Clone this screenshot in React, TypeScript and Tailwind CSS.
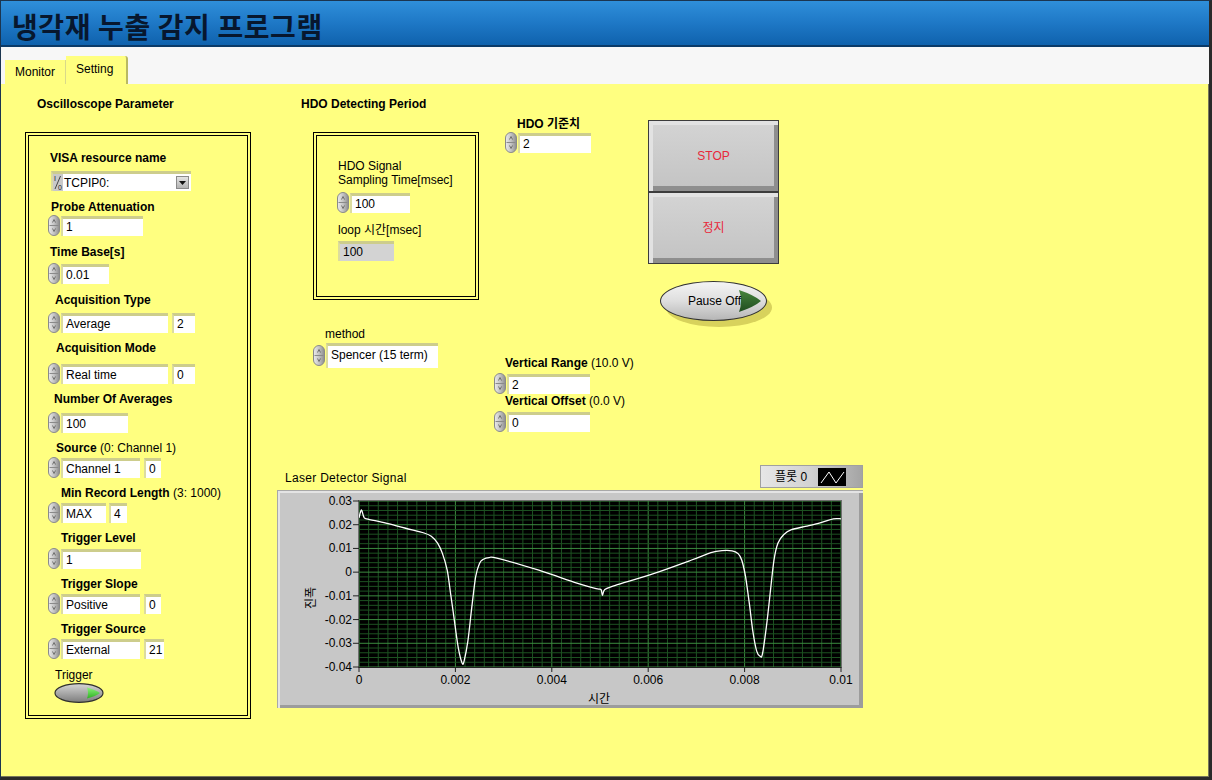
import React from 'react';

const F = 'font-[family-name:Liberation_Sans,Noto_Sans_CJK_KR,sans-serif]';
const SVGF = 'Liberation Sans, Noto Sans CJK KR, sans-serif';

// waveform samples [time, amplitude]
const TRACE: [number, number][] = [
  [0, 0.0229], [0.00005, 0.0262], [0.0001, 0.0233], [0.00016, 0.0225], [0.00056, 0.0207],
  [0.00095, 0.0186], [0.00135, 0.0165], [0.0015, 0.0151], [0.00163, 0.0122], [0.00173, 0.0079],
  [0.00183, 0.0008], [0.0019, -0.0091], [0.00198, -0.0205], [0.00206, -0.0319], [0.00214, -0.0383],
  [0.00218, -0.0375], [0.00226, -0.029], [0.00234, -0.0148], [0.00242, -0.002], [0.0025, 0.0037],
  [0.00258, 0.0054], [0.0027, 0.0061], [0.00286, 0.0059], [0.00373, 0.0008], [0.00452, -0.0046],
  [0.00492, -0.007], [0.00502, -0.0073], [0.00505, -0.0098], [0.0051, -0.0073], [0.00532, -0.0056],
  [0.00611, -0.0006], [0.0069, 0.0051], [0.0073, 0.0082], [0.00754, 0.0091], [0.00774, 0.009],
  [0.00786, 0.0079], [0.00794, 0.0051], [0.00802, -0.002], [0.0081, -0.0134], [0.00817, -0.0248],
  [0.00825, -0.0333], [0.00832, -0.0354], [0.00837, -0.0346], [0.00845, -0.0233], [0.00853, -0.0091],
  [0.00861, 0.0051], [0.00869, 0.0122], [0.00881, 0.0158], [0.00897, 0.0179], [0.00929, 0.0194],
  [0.0096, 0.021], [0.00984, 0.0225], [0.01, 0.0225],
];

function Spin() {
  return (
    <svg width="12" height="21" viewBox="0 0 12 21" className="shrink-0">
      <defs>
        <linearGradient id="spg" x1="0" x2="1" y1="0" y2="0">
          <stop offset="0" stopColor="#ececec" />
          <stop offset="0.5" stopColor="#c4c4c4" />
          <stop offset="1" stopColor="#8c8c8c" />
        </linearGradient>
      </defs>
      <rect x="0.5" y="0.5" width="11" height="20" rx="5.5" fill="url(#spg)" stroke="#8a8a8a" />
      <line x1="1.5" y1="10.5" x2="10.5" y2="10.5" stroke="#8a8a8a" />
      <path d="M4.5 7.5 L6 4.5 L7.5 7.5" fill="none" stroke="#5a5a5a" strokeWidth="0.8" />
      <path d="M4.5 13.5 L6 16.5 L7.5 13.5" fill="none" stroke="#5a5a5a" strokeWidth="0.8" />
    </svg>
  );
}

function Field({ w, v, gray = false, extra = '' }: { w: string; v: string; gray?: boolean; extra?: string }) {
  return (
    <div
      className={`${w} ${extra} h-[20px] shrink-0 border-t-[3px] border-l-[2px] border-t-[#cdcd8c] border-l-[#dcdc9e] ${
        gray ? 'bg-[#d3d3d3]' : 'bg-white'
      } pl-[3px] text-[12px] leading-[17px] text-black whitespace-nowrap overflow-hidden`}
    >
      {v}
    </div>
  );
}

function Label({ children, cls, bold = true }: { children: React.ReactNode; cls: string; bold?: boolean }) {
  return (
    <div className={`${cls} h-[14px] text-[12px] leading-[14px] whitespace-nowrap text-black ${bold ? 'font-bold' : ''}`}>
      {children}
    </div>
  );
}

function Visa() {
  return (
    <div className="ml-[22px] flex h-[20px] w-[140px] border-t-[3px] border-l-[2px] border-t-[#cdcd8c] border-l-[#dcdc9e]">
      <svg width="10" height="17" viewBox="0 0 10 17" className="bg-[#c9c9c9] shrink-0">
        <text x="1" y="7" fontSize="7" fontFamily={SVGF} fill="#222">I</text>
        <line x1="7.5" y1="2" x2="2" y2="15" stroke="#222" strokeWidth="0.8" />
        <text x="5" y="16" fontSize="7" fontFamily={SVGF} fill="#222">0</text>
      </svg>
      <div className="flex-1 bg-white flex items-center justify-between pl-[1px] pr-[2px]">
        <span className="text-[12px] leading-[14px]">TCPIP0:</span>
        <div className="w-[13px] h-[13px] bg-linear-to-b from-[#e4e4e4] to-[#b4b4b4] border border-[#8a8a8a] flex items-center justify-center">
          <svg width="7" height="4" viewBox="0 0 7 4">
            <path d="M0 0 L7 0 L3.5 4 Z" fill="#111" />
          </svg>
        </div>
      </div>
    </div>
  );
}

function Toggle() {
  return (
    <svg width="50" height="20" viewBox="0 0 50 20" className="ml-[25px]">
      <defs>
        <linearGradient id="tgg" x1="0" x2="0" y1="0" y2="1">
          <stop offset="0" stopColor="#d6d6d6" />
          <stop offset="0.5" stopColor="#a9a9a9" />
          <stop offset="1" stopColor="#7d7d7d" />
        </linearGradient>
        <linearGradient id="tgn" x1="0" x2="0" y1="0" y2="1">
          <stop offset="0" stopColor="#8af27a" />
          <stop offset="1" stopColor="#2fb022" />
        </linearGradient>
      </defs>
      <ellipse cx="25" cy="10" rx="24" ry="9.3" fill="url(#tgg)" stroke="#2e2e2e" strokeWidth="1.2" />
      <path d="M33 4.5 Q42 7 46 10 Q42 13 33 15.5 Q35 10 33 4.5 Z" fill="url(#tgn)" />
    </svg>
  );
}

function OscPanel() {
  return (
    <div className="ml-[24px] flex flex-col shrink-0">
      <Label cls="mt-[13px] ml-[12px]">Oscilloscope Parameter</Label>
      <div className="mt-[21px] w-[226px] h-[587px] border-[4px] border-double border-black flex flex-col">
        <div className="mt-[15px]">
          <Label cls="ml-[21px]">VISA resource name</Label>
          <div className="mt-[6px]">
            <Visa />
          </div>
        </div>
        <div className="mt-[9px]">
          <Label cls="ml-[22px]">Probe Attenuation</Label>
          <div className="mt-[1px] ml-[19px] flex items-center gap-[1px]">
            <Spin />
            <Field w="w-[82px]" v="1" />
          </div>
        </div>
        <div className="mt-[9px]">
          <Label cls="ml-[21px]">Time Base[s]</Label>
          <div className="mt-[4px] ml-[19px] flex items-center gap-[1px]">
            <Spin />
            <Field w="w-[48px]" v="0.01" />
          </div>
        </div>
        <div className="mt-[9px]">
          <Label cls="ml-[26px]">Acquisition Type</Label>
          <div className="mt-[5px] ml-[19px] flex items-center gap-[1px]">
            <Spin />
            <Field w="w-[107px]" v="Average" />
            <Field w="w-[23px]" v="2" extra="ml-[3px]" />
          </div>
        </div>
        <div className="mt-[8px]">
          <Label cls="ml-[27px]">Acquisition Mode</Label>
          <div className="mt-[8px] ml-[19px] flex items-center gap-[1px]">
            <Spin />
            <Field w="w-[107px]" v="Real time" />
            <Field w="w-[23px]" v="0" extra="ml-[3px]" />
          </div>
        </div>
        <div className="mt-[8px]">
          <Label cls="ml-[25px]">Number Of Averages</Label>
          <div className="mt-[6px] ml-[19px] flex items-center gap-[1px]">
            <Spin />
            <Field w="w-[67px]" v="100" />
          </div>
        </div>
        <div className="mt-[8px]">
          <Label cls="ml-[27px]">
            Source <span className="font-normal">(0: Channel 1)</span>
          </Label>
          <div className="mt-[2px] ml-[19px] flex items-center gap-[1px]">
            <Spin />
            <Field w="w-[79px]" v="Channel 1" />
            <Field w="w-[17px]" v="0" extra="ml-[3px]" />
          </div>
        </div>
        <div className="mt-[8px]">
          <Label cls="ml-[32px]">
            Min Record Length <span className="font-normal">(3: 1000)</span>
          </Label>
          <div className="mt-[2px] ml-[19px] flex items-center gap-[1px]">
            <Spin />
            <Field w="w-[45px]" v="MAX" />
            <Field w="w-[18px]" v="4" extra="ml-[2px]" />
          </div>
        </div>
        <div className="mt-[8px]">
          <Label cls="ml-[32px]">Trigger Level</Label>
          <div className="mt-[3px] ml-[19px] flex items-center gap-[1px]">
            <Spin />
            <Field w="w-[80px]" v="1" />
          </div>
        </div>
        <div className="mt-[8px]">
          <Label cls="ml-[32px]">Trigger Slope</Label>
          <div className="mt-[2px] ml-[19px] flex items-center gap-[1px]">
            <Spin />
            <Field w="w-[79px]" v="Positive" />
            <Field w="w-[17px]" v="0" extra="ml-[3px]" />
          </div>
        </div>
        <div className="mt-[8px]">
          <Label cls="ml-[32px]">Trigger Source</Label>
          <div className="mt-[2px] ml-[19px] flex items-center gap-[1px]">
            <Spin />
            <Field w="w-[79px]" v="External" />
            <Field w="w-[20px]" v="21" extra="ml-[3px]" />
          </div>
        </div>
        <div className="mt-[9px]">
          <Label cls="ml-[26px]" bold={false}>Trigger</Label>
          <div className="mt-[1px]">
            <Toggle />
          </div>
        </div>
      </div>
    </div>
  );
}

function BigButton({ text }: { text: string }) {
  return (
    <div className="w-[131px] h-[72px] border border-[#3c3c3c] bg-linear-to-b from-[#d4d4d4] to-[#c3c3c3] shadow-[inset_4px_4px_0_#e2e2e2,inset_-4px_-5px_0_#8e8e8e] flex items-center justify-center text-[12px] leading-[14px] text-[#e8283a]">
      {text}
    </div>
  );
}

function PauseButton() {
  return (
    <div className="relative mt-[17px] ml-[12px] w-[114px] h-[47px]">
      <div className="absolute left-[6px] top-[7px] w-[106px] h-[39px] rounded-[50%] bg-[#d8d25c]" />
      <div className="absolute left-0 top-0 w-[107px] h-[40px] rounded-[50%] border border-[#333] bg-linear-to-b from-[#f4f4f4] via-[#dedede] to-[#b6b6b6]" />
      <svg width="24" height="24" viewBox="0 0 24 24" className="absolute left-[78px] top-[8px]">
        <defs>
          <linearGradient id="pgn" x1="0" x2="0" y1="0" y2="1">
            <stop offset="0" stopColor="#46843d" />
            <stop offset="1" stopColor="#1f4d1f" />
          </linearGradient>
        </defs>
        <path d="M1 1 Q16 6 23 12 Q16 18 1 23 Q5 12 1 1 Z" fill="url(#pgn)" />
      </svg>
      <div className="absolute left-0 top-0 w-[107px] h-[40px] flex items-center justify-center pl-[2px] text-[12px] leading-[14px] text-black">
        Pause Off
      </div>
    </div>
  );
}

function Graph() {
  const X0 = 81;
  const X1 = 563;
  const Y0 = 10;
  const Y1 = 176;
  const px = (t: number) => X0 + (t / 0.01) * (X1 - X0);
  const py = (v: number) => Y0 + ((0.03 - v) / 0.07) * (Y1 - Y0);

  const pts = TRACE.map(([t, v]) => [px(t), py(v)]);
  let d = `M${pts[0][0].toFixed(1)},${pts[0][1].toFixed(1)}`;
  for (let i = 0; i < pts.length - 1; i++) {
    const p0 = pts[i - 1] || pts[i];
    const p1 = pts[i];
    const p2 = pts[i + 1];
    const p3 = pts[i + 2] || p2;
    const c1x = p1[0] + (p2[0] - p0[0]) / 6;
    const c1y = p1[1] + (p2[1] - p0[1]) / 6;
    const c2x = p2[0] - (p3[0] - p1[0]) / 6;
    const c2y = p2[1] - (p3[1] - p1[1]) / 6;
    d += ` C${c1x.toFixed(1)},${c1y.toFixed(1)} ${c2x.toFixed(1)},${c2y.toFixed(1)} ${p2[0].toFixed(1)},${p2[1].toFixed(1)}`;
  }

  const vLines = Array.from({ length: 51 }, (_, i) => i);
  const hLines = Array.from({ length: 36 }, (_, i) => i);
  const yLabels = ['0.03', '0.02', '0.01', '0', '-0.01', '-0.02', '-0.03', '-0.04'];
  const xLabels = ['0', '0.002', '0.004', '0.006', '0.008', '0.01'];

  return (
    <div className="w-[586px] flex flex-col">
      <div className="h-[25px] flex items-start justify-between">
        <span className="pl-[8px] pt-[6px] text-[12px] leading-[14px] tracking-[0.3px]">Laser Detector Signal</span>
        <div className="w-[103px] h-[23px] flex items-center gap-[11px] pl-[14px] bg-linear-to-r from-[#e6e6e6] via-[#d2d2d2] to-[#a4a4a4] border border-[#a0a0a0]">
          <span className="text-[12px] leading-[14px]">플롯 0</span>
          <svg width="28" height="18" viewBox="0 0 28 18" className="bg-black">
            <polyline points="3,15 11,4 18,15 26,4" fill="none" stroke="#fff" strokeWidth="1" />
          </svg>
        </div>
      </div>
      <div className="w-[586px] h-[218px] bg-[#c7c7c7] border-t border-l border-[#a8a8a8] shadow-[inset_2px_2px_0_#e4e4e4,inset_-4px_-3px_0_#9c9c9c]">
        <svg width="585" height="217" viewBox="0 0 585 217" fontFamily={SVGF}>
          <rect x={X0} y={Y0} width={X1 - X0} height={Y1 - Y0} fill="#000" />
          {vLines.map((i) => {
            const x = X0 + (i * (X1 - X0)) / 50;
            return (
              <line
                key={'v' + i}
                x1={x}
                x2={x}
                y1={Y0}
                y2={Y1}
                stroke={i % 10 === 0 ? '#3b8a3f' : '#1d5222'}
                strokeWidth="1"
              />
            );
          })}
          {hLines.map((j) => {
            const y = Y0 + (j * (Y1 - Y0)) / 35;
            return (
              <line
                key={'h' + j}
                x1={X0}
                x2={X1}
                y1={y}
                y2={y}
                stroke={j % 5 === 0 ? '#3b8a3f' : '#1d5222'}
                strokeWidth="1"
              />
            );
          })}
          <path d={d} fill="none" stroke="#fff" strokeWidth="1.3" strokeLinejoin="round" />
          <rect x={X0 - 0.5} y={Y0 - 0.5} width={X1 - X0 + 1} height={Y1 - Y0 + 1} fill="none" stroke="#6e6e6e" />
          {yLabels.map((l, k) => {
            const y = Y0 + (k * (Y1 - Y0)) / 7;
            return (
              <g key={l}>
                <line x1={X0 - 6} x2={X0} y1={y} y2={y} stroke="#222" />
                <text x={X0 - 7} y={y + 4} fontSize="12" textAnchor="end" fill="#000">
                  {l}
                </text>
              </g>
            );
          })}
          <line x1={X0} x2={X1} y1={Y1 + 0.5} y2={Y1 + 0.5} stroke="#222" />
          {xLabels.map((l, k) => {
            const x = X0 + (k * (X1 - X0)) / 5;
            return (
              <g key={l}>
                <line x1={x} x2={x} y1={Y1} y2={Y1 + 5} stroke="#222" />
                <text x={x} y={Y1 + 17} fontSize="12" textAnchor="middle" fill="#000">
                  {l}
                </text>
              </g>
            );
          })}
          <text x="321" y="212" fontSize="12" textAnchor="middle" fill="#000">
            시간
          </text>
          <text x="37" y="107" fontSize="12" textAnchor="middle" fill="#000" transform="rotate(-90 37 107)">
            진폭
          </text>
        </svg>
      </div>
    </div>
  );
}

function MainArea() {
  return (
    <div className="ml-[26px] flex flex-col">
      <div className="h-[381px] flex items-start">
        {/* HDO detecting period + method */}
        <div className="ml-[24px] w-[178px] shrink-0 flex flex-col">
          <Label cls="mt-[13px]">HDO Detecting Period</Label>
          <div className="mt-[21px] ml-[12px] w-[166px] h-[168px] border-[4px] border-double border-black flex flex-col">
            <div className="mt-[23px] ml-[21px] text-[12px] leading-[14px]">
              <div>HDO Signal</div>
              <div>Sampling Time[msec]</div>
            </div>
            <div className="mt-[5px] ml-[20px] flex items-center gap-[1px]">
              <Spin />
              <Field w="w-[60px]" v="100" />
            </div>
            <Label cls="mt-[10px] ml-[21px]" bold={false}>
              loop 시간[msec]
            </Label>
            <div className="mt-[4px] ml-[21px]">
              <Field w="w-[56px]" v="100" gray />
            </div>
          </div>
          <Label cls="mt-[27px] ml-[24px]" bold={false}>
            method
          </Label>
          <div className="mt-[2px] ml-[12px] flex items-start gap-[1px]">
            <div className="mt-[2px]">
              <Spin />
            </div>
            <div className="w-[112px] h-[25px] border-t-[3px] border-l-[2px] border-t-[#cdcd8c] border-l-[#dcdc9e] bg-white pl-[3px] pt-[2px] text-[12px] leading-[14px] whitespace-nowrap">
              Spencer (15 term)
            </div>
          </div>
        </div>

        {/* HDO threshold + vertical settings */}
        <div className="ml-[15px] w-[143px] shrink-0 flex flex-col">
          <Label cls="mt-[33px] ml-[23px]">HDO 기준치</Label>
          <div className="mt-[1px] ml-[11px] flex items-center gap-[1px]">
            <Spin />
            <Field w="w-[73px]" v="2" />
          </div>
          <Label cls="mt-[203px] ml-[11px]">
            Vertical Range <span className="font-normal">(10.0 V)</span>
          </Label>
          <div className="mt-[3px] flex items-center gap-[1px]">
            <Spin />
            <Field w="w-[83px]" v="2" />
          </div>
          <Label cls="mt-[0px] ml-[11px]">
            Vertical Offset <span className="font-normal">(0.0 V)</span>
          </Label>
          <div className="mt-[3px] flex items-center gap-[1px]">
            <Spin />
            <Field w="w-[83px]" v="0" />
          </div>
        </div>

        {/* stop buttons */}
        <div className="ml-[11px] flex flex-col">
          <div className="mt-[36px] flex flex-col">
            <BigButton text="STOP" />
            <BigButton text="정지" />
          </div>
          <PauseButton />
        </div>
      </div>
      <Graph />
    </div>
  );
}

export default function App() {
  return (
    <div
      className={`${F} w-[1212px] h-[780px] flex flex-col bg-[#dcdcdc] border-l border-t border-l-[#1b3550] border-t-[#1b3550] border-r-[3px] border-b-[3px] border-r-[#2a2a2a] border-b-[#2a2a2a] overflow-hidden text-black`}
    >
      <div className="h-[46px] shrink-0 flex items-center pl-[11px] pt-[6px] bg-linear-to-b from-[#2f8fda] via-[#1e78c6] to-[#0f62ad] border-b-2 border-b-[#0a3a68]">
        <span className="font-[family-name:Noto_Sans_CJK_KR,sans-serif] text-[28px] leading-[32px] tracking-[0.6px] font-bold text-[#07172e]">
          냉각재 누출 감지 프로그램
        </span>
      </div>
      <div className="h-[37px] shrink-0 flex items-end pl-[4px] bg-[#f7f7f7]">
        <div className="h-[24px] w-[61px] bg-[#ffff80] border-r border-r-[#d9d98a] pl-[10px] pt-[5px] text-[12px] leading-[14px]">
          Monitor
        </div>
        <div className="h-[28px] w-[62px] bg-[#ffff80] rounded-tr-[3px] border-r-2 border-r-[#b9b963] pl-[10px] pt-[6px] text-[12px] leading-[14px]">
          Setting
        </div>
      </div>
      <div className="flex-1 flex items-start bg-[#ffff80] border-r border-b border-r-[#77775a] border-b-[#77775a]">
        <OscPanel />
        <MainArea />
      </div>
    </div>
  );
}
